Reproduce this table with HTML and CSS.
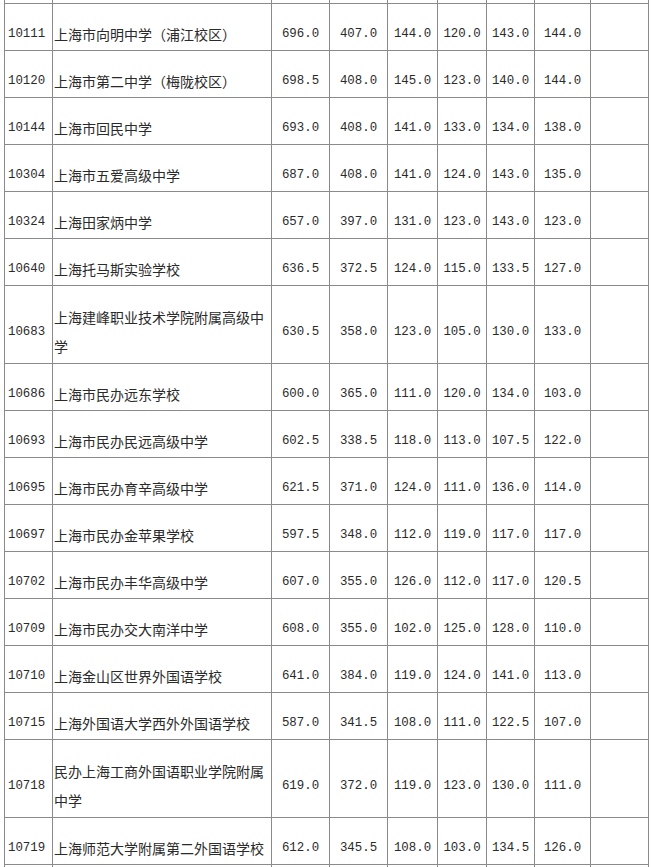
FILE: index.html
```html
<!DOCTYPE html>
<html lang="zh-CN">
<head>
<meta charset="utf-8">
<title>分数线</title>
<link rel="stylesheet" href="styles.css">
</head>
<body>
<div class="wrap">
<table class="scores">
<colgroup>
<col class="c-code"><col class="c-name"><col class="c-n1"><col class="c-n2"><col class="c-n3"><col class="c-n4"><col class="c-n5"><col class="c-n6"><col class="c-x">
</colgroup>
<tbody>
<tr class="cut"><td></td><td></td><td></td><td></td><td></td><td></td><td></td><td></td><td></td></tr>
<tr><td class="code">10111</td><td class="name">上海市向明中学（浦江校区）</td><td>696.0</td><td>407.0</td><td>144.0</td><td>120.0</td><td>143.0</td><td>144.0</td><td></td></tr>
<tr><td class="code">10120</td><td class="name">上海市第二中学（梅陇校区）</td><td>698.5</td><td>408.0</td><td>145.0</td><td>123.0</td><td>140.0</td><td>144.0</td><td></td></tr>
<tr><td class="code">10144</td><td class="name">上海市回民中学</td><td>693.0</td><td>408.0</td><td>141.0</td><td>133.0</td><td>134.0</td><td>138.0</td><td></td></tr>
<tr><td class="code">10304</td><td class="name">上海市五爱高级中学</td><td>687.0</td><td>408.0</td><td>141.0</td><td>124.0</td><td>143.0</td><td>135.0</td><td></td></tr>
<tr><td class="code">10324</td><td class="name">上海田家炳中学</td><td>657.0</td><td>397.0</td><td>131.0</td><td>123.0</td><td>143.0</td><td>123.0</td><td></td></tr>
<tr><td class="code">10640</td><td class="name">上海托马斯实验学校</td><td>636.5</td><td>372.5</td><td>124.0</td><td>115.0</td><td>133.5</td><td>127.0</td><td></td></tr>
<tr class="tall"><td class="code">10683</td><td class="name">上海建峰职业技术学院附属高级中学</td><td>630.5</td><td>358.0</td><td>123.0</td><td>105.0</td><td>130.0</td><td>133.0</td><td></td></tr>
<tr><td class="code">10686</td><td class="name">上海市民办远东学校</td><td>600.0</td><td>365.0</td><td>111.0</td><td>120.0</td><td>134.0</td><td>103.0</td><td></td></tr>
<tr><td class="code">10693</td><td class="name">上海市民办民远高级中学</td><td>602.5</td><td>338.5</td><td>118.0</td><td>113.0</td><td>107.5</td><td>122.0</td><td></td></tr>
<tr><td class="code">10695</td><td class="name">上海市民办育辛高级中学</td><td>621.5</td><td>371.0</td><td>124.0</td><td>111.0</td><td>136.0</td><td>114.0</td><td></td></tr>
<tr><td class="code">10697</td><td class="name">上海市民办金苹果学校</td><td>597.5</td><td>348.0</td><td>112.0</td><td>119.0</td><td>117.0</td><td>117.0</td><td></td></tr>
<tr><td class="code">10702</td><td class="name">上海市民办丰华高级中学</td><td>607.0</td><td>355.0</td><td>126.0</td><td>112.0</td><td>117.0</td><td>120.5</td><td></td></tr>
<tr><td class="code">10709</td><td class="name">上海市民办交大南洋中学</td><td>608.0</td><td>355.0</td><td>102.0</td><td>125.0</td><td>128.0</td><td>110.0</td><td></td></tr>
<tr><td class="code">10710</td><td class="name">上海金山区世界外国语学校</td><td>641.0</td><td>384.0</td><td>119.0</td><td>124.0</td><td>141.0</td><td>113.0</td><td></td></tr>
<tr><td class="code">10715</td><td class="name">上海外国语大学西外外国语学校</td><td>587.0</td><td>341.5</td><td>108.0</td><td>111.0</td><td>122.5</td><td>107.0</td><td></td></tr>
<tr class="tall"><td class="code">10718</td><td class="name">民办上海工商外国语职业学院附属中学</td><td>619.0</td><td>372.0</td><td>119.0</td><td>123.0</td><td>130.0</td><td>111.0</td><td></td></tr>
<tr><td class="code">10719</td><td class="name">上海师范大学附属第二外国语学校</td><td>612.0</td><td>345.5</td><td>108.0</td><td>103.0</td><td>134.5</td><td>126.0</td><td></td></tr>
<tr><td></td><td></td><td></td><td></td><td></td><td></td><td></td><td></td><td></td></tr>
</tbody>
</table>
</div>
</body>
</html>
```
FILE: styles.css
```css
html, body {
  margin: 0;
  padding: 0;
  background: #ffffff;
  overflow: hidden;
}
.wrap {
  padding-left: 4px;
  height: 867px;
  overflow: hidden;
}
.scores {
  border-collapse: collapse;
  table-layout: fixed;
  width: 645px;
  margin-top: -44px;
  color: #2a2a2a;
  font-family: "Liberation Mono", "DejaVu Sans Mono", monospace;
  font-size: 12.4px;
}
.c-code { width: 48px; }
.c-name { width: 219px; }
.c-n1 { width: 58px; }
.c-n2 { width: 58px; }
.c-n3 { width: 50px; }
.c-n4 { width: 49px; }
.c-n5 { width: 48px; }
.c-n6 { width: 56px; }
.c-x { width: 58px; }
.scores td {
  border: 1px solid #8a8a8a;
  padding: 14px 0 0 0;
  height: 32px;
  box-sizing: content-box;
  line-height: 28px;
  vertical-align: middle;
  text-align: center;
  white-space: nowrap;
  overflow: hidden;
}
.scores tr.tall td {
  height: 63px;
}
.scores td.code {
  text-align: left;
  padding-left: 3px;
}
.scores td.name {
  text-align: left;
  padding-left: 1px;
  white-space: normal;
  font-family: "Noto Sans CJK SC", "Noto Sans", sans-serif;
  font-size: 14px;
  line-height: 28.5px;
  color: #2a2a2a;
}
```
